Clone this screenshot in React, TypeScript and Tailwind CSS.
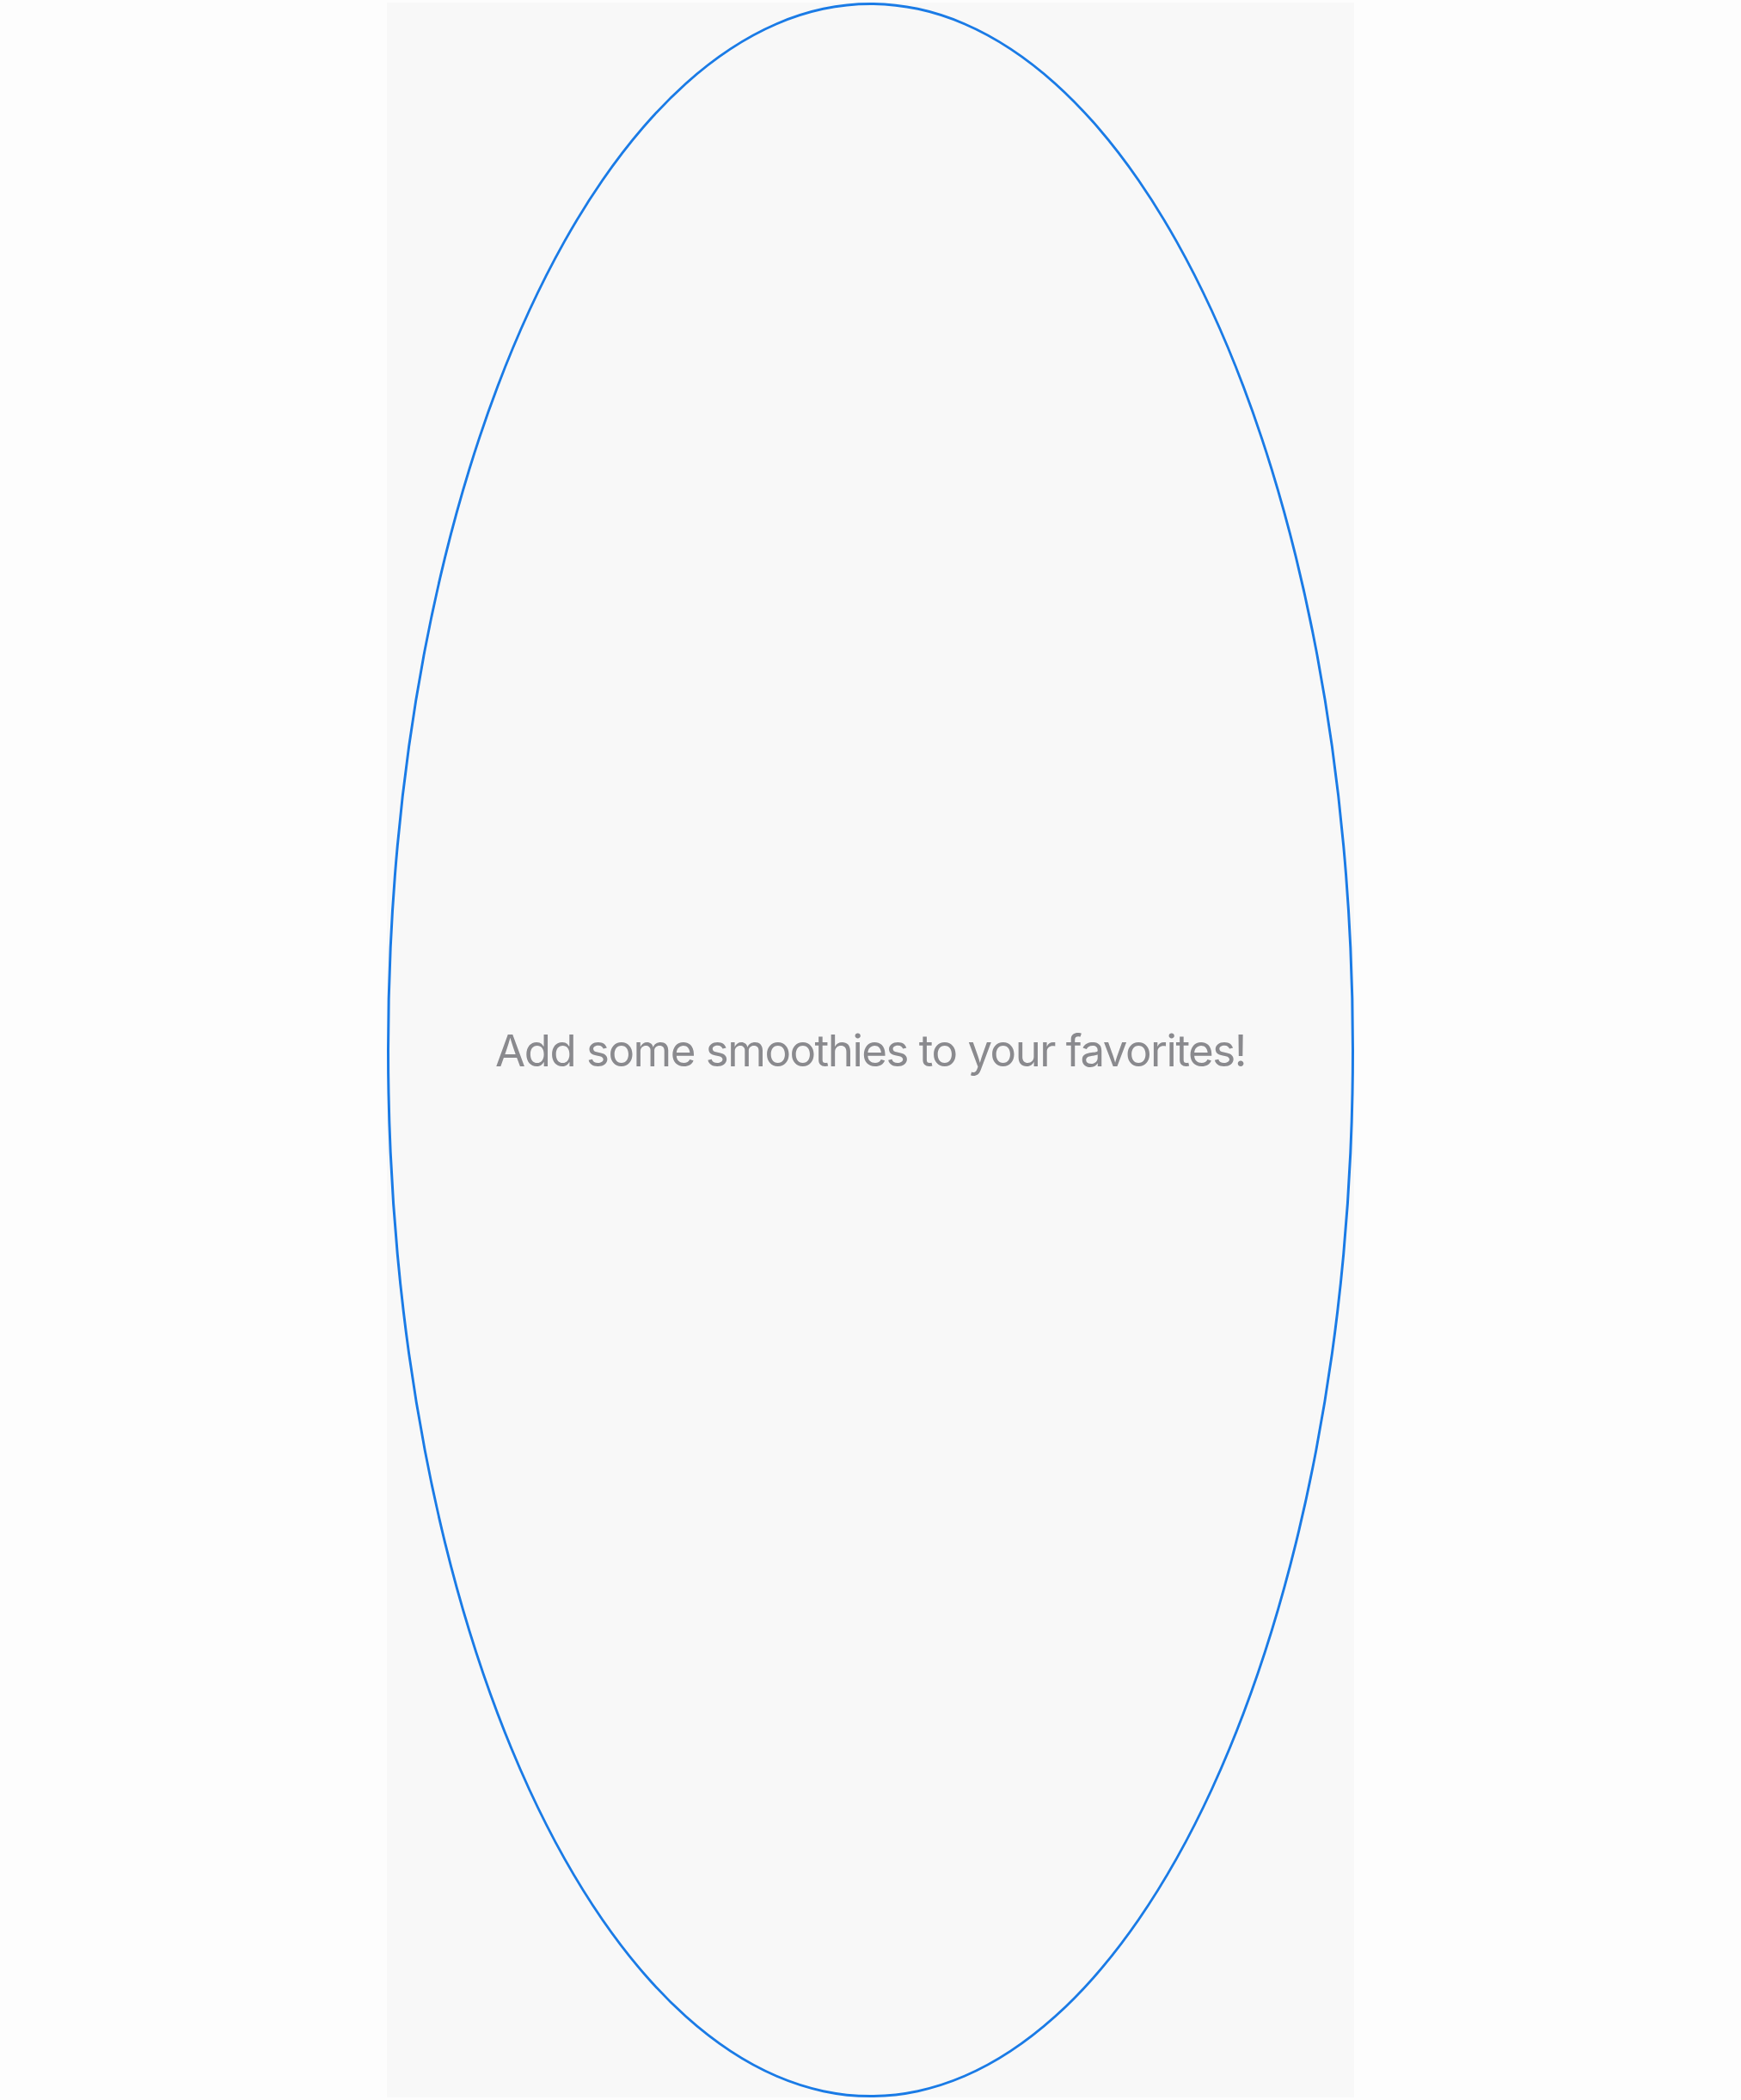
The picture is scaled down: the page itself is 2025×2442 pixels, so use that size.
export default function App() {
  return (
    <div className="flex min-h-[2442px] w-full justify-center bg-[#fdfdfd] py-[3px]">
      <div className="flex h-[2436px] w-[1125px] bg-[#f8f8f8]">
        <div className="flex flex-1 items-center justify-center rounded-[50%] border-[3px] border-[#1a7be6]">
          <p className="font-['Inter','Liberation_Sans',sans-serif] text-[51px] leading-none tracking-[-1.5px] text-[#8a8a8e]">
            Add some smoothies to your favorites!
          </p>
        </div>
      </div>
    </div>
  )
}
